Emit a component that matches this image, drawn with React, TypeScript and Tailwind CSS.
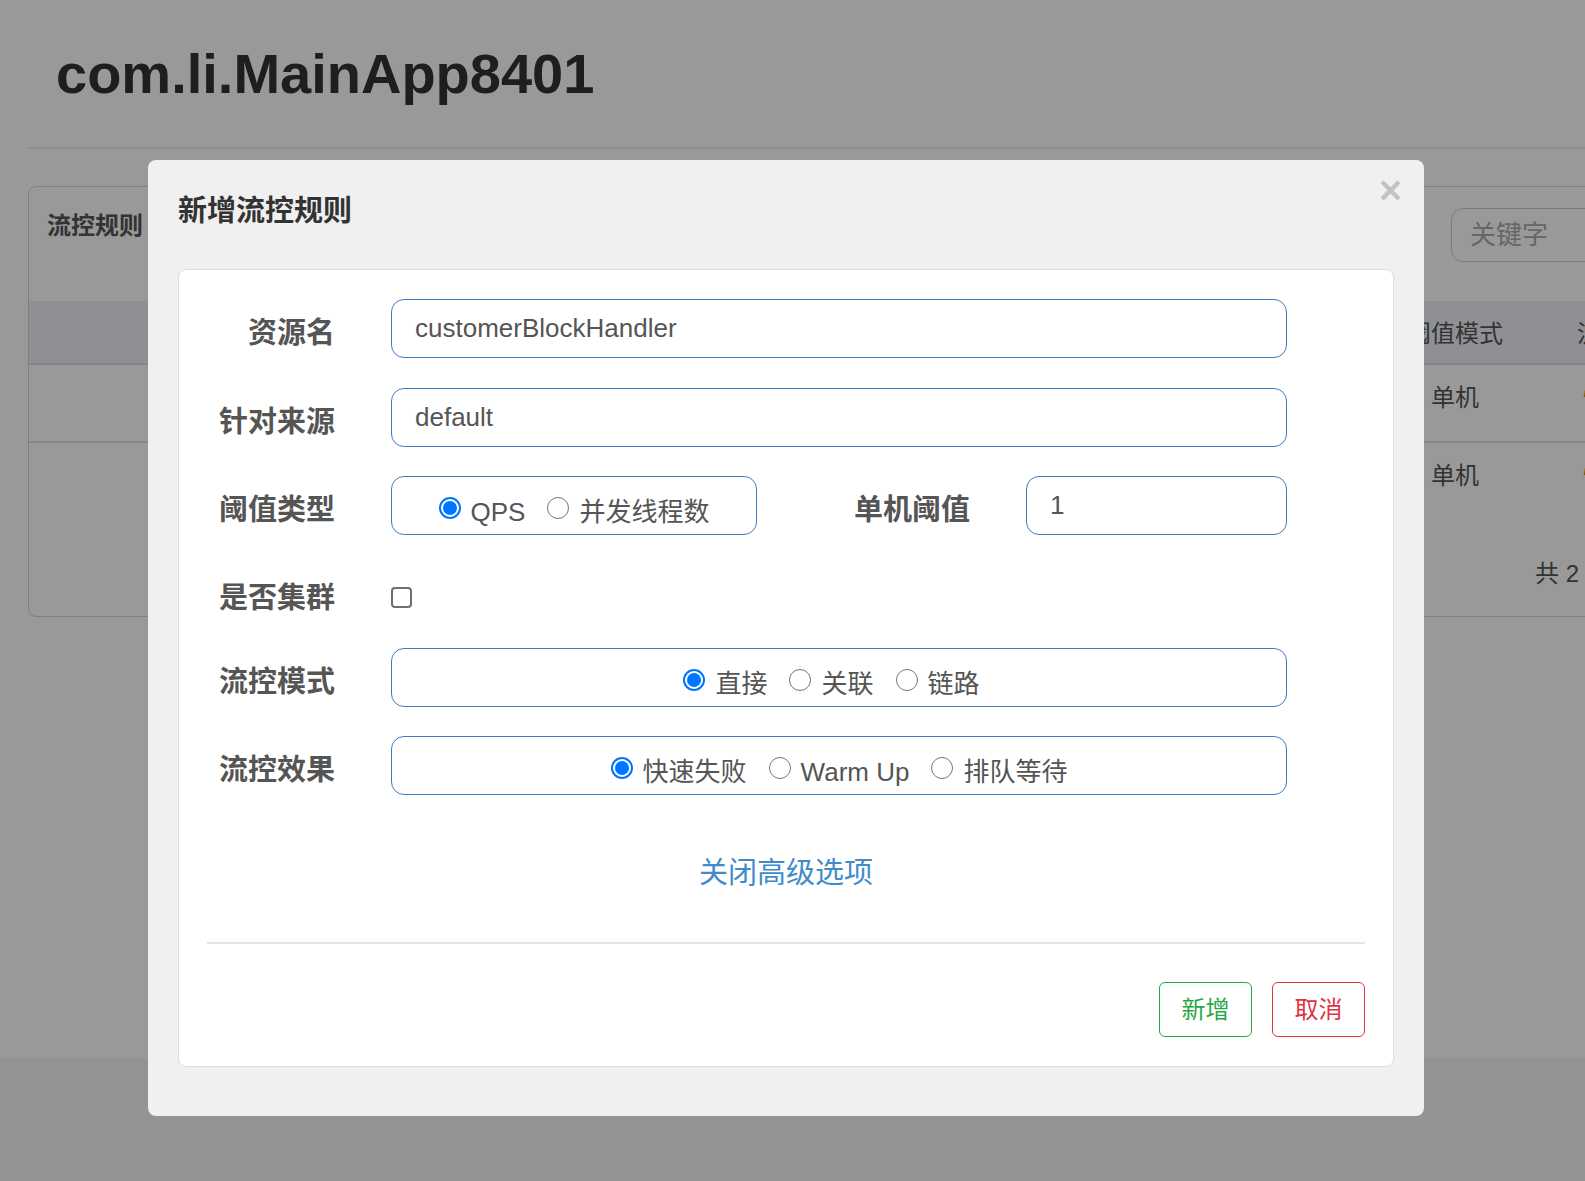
import clsx from 'clsx';

function Radio({ checked }: { checked?: boolean }) {
  if (checked) {
    return (
      <span className="mt-[4px] flex h-[22px] w-[22px] shrink-0 items-center justify-center rounded-full border-2 border-[#0075ff] bg-white">
        <span className="h-[14px] w-[14px] rounded-full bg-[#0075ff]" />
      </span>
    );
  }
  return <span className="mt-[4px] h-[22px] w-[22px] shrink-0 rounded-full border-[1.5px] border-[#767676] bg-white" />;
}

function Option({ label, checked, first }: { label: string; checked?: boolean; first?: boolean }) {
  return (
    <div className={clsx('flex items-center', !first && 'ml-[22px]')}>
      <Radio checked={checked} />
      <span className="ml-[10px] whitespace-nowrap pt-[12px] text-[26px] leading-[30px] text-[#555]">{label}</span>
    </div>
  );
}

function FormLabel({ children, shift = true }: { children: string; shift?: boolean }) {
  return (
    <div
      className={clsx(
        'w-[156px] shrink-0 text-right text-[29px] font-bold leading-[40px] text-[#555]',
        shift && 'pt-[8px]'
      )}
    >
      {children}
    </div>
  );
}

function TextBox({ value, className }: { value: string; className?: string }) {
  return (
    <div
      className={clsx(
        'flex h-full items-center rounded-[13px] border border-[#3d7cc0] bg-white px-[23px] text-[26px] text-[#555]',
        className
      )}
    >
      {value}
    </div>
  );
}

export default function App() {
  return (
    <div className="relative h-screen overflow-hidden bg-[#f6f6f6] font-['Liberation_Sans','Noto_Sans_CJK_SC',sans-serif]">
      {/* page behind the dialog */}
      <div className="h-[1058px] w-[1758px] bg-white px-[28px]">
        <div className="border-b-2 border-[#eeeeee] pb-[42px] pl-[28px] pt-[43px]">
          <h1 className="text-[56px] font-bold leading-[62px] text-[#333]">com.li.MainApp8401</h1>
        </div>

        <div className="mt-[37px] h-[431px] rounded-[8px] border border-[#d5d5d5]">
          <div className="flex h-[114px] items-start pt-[20px]">
            <div className="mt-[2px] pl-[18px] text-[24px] font-bold leading-[34px] text-[#555]">流控规则</div>
            <div className="ml-auto mr-[18px] mt-[1px] flex h-[54px] w-[260px] items-center rounded-[12px] border border-[#cccccc] pl-[18px] text-[26px] text-[#aaaaaa]">
              关键字
            </div>
          </div>

          <div className="flex h-[64px] items-center border-b-2 border-[#dedede] bg-[#eef0f5] pt-[4px] text-[24px] text-[#555]">
            <div className="w-[1351px] shrink-0" />
            <div className="w-[150px] shrink-0 text-center">阈值模式</div>
            <div className="w-[190px] shrink-0 text-center">流控效果</div>
          </div>
          <div className="flex h-[78px] items-start border-b-2 border-[#dedede] pt-[17px] text-[24px] leading-[32px] text-[#555]">
            <div className="w-[1351px] shrink-0" />
            <div className="w-[150px] shrink-0 text-center">单机</div>
            <div className="w-[190px] shrink-0 pl-[53px] text-[#d58512]">快速失败</div>
          </div>
          <div className="flex h-[78px] items-start pt-[17px] text-[24px] leading-[32px] text-[#555]">
            <div className="w-[1351px] shrink-0" />
            <div className="w-[150px] shrink-0 text-center">单机</div>
            <div className="w-[190px] shrink-0 pl-[53px] text-[#d58512]">快速失败</div>
          </div>
          <div className="mt-[37px] whitespace-nowrap pl-[1506px] text-[24px] leading-[32px] text-[#555]">共 2 条记录</div>
        </div>
      </div>

      {/* backdrop */}
      <div className="fixed inset-0 bg-black/40" />

      {/* dialog */}
      <div className="fixed inset-0">
        <div className="ml-[148px] mt-[160px] w-[1276px] rounded-[8px] bg-[#f0f0f0] px-[30px] pb-[49px] pt-[29px]">
          <div className="flex h-[42px] items-start">
            <div className="mt-[2px] text-[29px] font-bold leading-[40px] text-[#333]">新增流控规则</div>
            <button className="-mr-[8px] -mt-[19px] ml-auto text-[40px] font-bold leading-none text-black/20">×</button>
          </div>

          <div className="mt-[38px] rounded-[8px] border border-[#dddddd] bg-white pb-[29px] pt-[29px]">
            <div className="flex h-[59px] items-center">
              <FormLabel>资源名</FormLabel>
              <TextBox value="customerBlockHandler" className="ml-[56px] w-[896px]" />
            </div>

            <div className="mt-[30px] flex h-[59px] items-center">
              <FormLabel>针对来源</FormLabel>
              <TextBox value="default" className="ml-[56px] w-[896px]" />
            </div>

            <div className="mt-[29px] flex h-[59px] items-center">
              <FormLabel>阈值类型</FormLabel>
              <div className="ml-[56px] flex h-full w-[366px] items-center justify-center rounded-[13px] border border-[#3d7cc0]">
                <Option first checked label="QPS" />
                <Option label="并发线程数" />
              </div>
              <div className="w-[213px] shrink-0 pt-[8px] text-right text-[29px] font-bold leading-[40px] text-[#555]">单机阈值</div>
              <TextBox value="1" className="ml-[56px] w-[261px]" />
            </div>

            <div className="mt-[29px] flex h-[55px] items-center pt-[12px]">
              <FormLabel shift={false}>是否集群</FormLabel>
              <span className="ml-[56px] h-[21px] w-[21px] rounded-[4px] border-2 border-[#6f6f6f] bg-white" />
            </div>

            <div className="mt-[29px] flex h-[59px] items-center">
              <FormLabel>流控模式</FormLabel>
              <div className="ml-[56px] flex h-full w-[896px] items-center justify-center rounded-[13px] border border-[#3d7cc0] pr-[15px]">
                <Option first checked label="直接" />
                <Option label="关联" />
                <Option label="链路" />
              </div>
            </div>

            <div className="mt-[29px] flex h-[59px] items-center">
              <FormLabel>流控效果</FormLabel>
              <div className="ml-[56px] flex h-full w-[896px] items-center justify-center rounded-[13px] border border-[#3d7cc0]">
                <Option first checked label="快速失败" />
                <Option label="Warm Up" />
                <Option label="排队等待" />
              </div>
            </div>

            <div className="mt-[58px] text-center text-[29px] leading-[40px] text-[#428bca]">关闭高级选项</div>

            <div className="mx-[28px] mt-[49px] h-[2px] bg-[#e5e5e5]" />

            <div className="mt-[38px] flex justify-end gap-[20px] pr-[28px]">
              <button className="h-[55px] w-[93px] rounded-[6px] border border-[#28a745] bg-white text-[24px] text-[#28a745]">新增</button>
              <button className="h-[55px] w-[93px] rounded-[6px] border border-[#dc3545] bg-white text-[24px] text-[#dc3545]">取消</button>
            </div>
          </div>
        </div>
      </div>
    </div>
  );
}
